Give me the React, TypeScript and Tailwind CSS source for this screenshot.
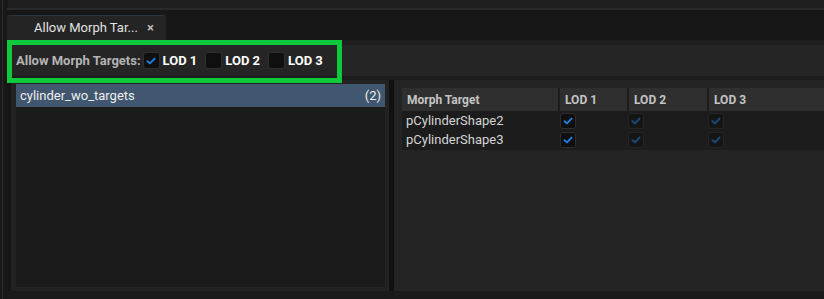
import React from 'react';

const font = { fontFamily: 'Roboto, "Noto Sans", sans-serif' };

const Check: React.FC<{ color: string }> = ({ color }) => (
  <svg width="10" height="10" viewBox="0 0 10 10" fill="none">
    <path d="M1.5 5.2 L4 7.4 L8.6 2.6" stroke={color} strokeWidth="1.9" strokeLinecap="round" strokeLinejoin="round" />
  </svg>
);

const Box: React.FC<{ checked?: boolean; disabled?: boolean; size?: string }> = ({ checked, disabled, size = 'w-[17px] h-[17px]' }) => (
  <div
    className={`${size} flex items-center justify-center rounded-[3px] border ${
      disabled ? 'bg-[#151515] border-[#242424]' : 'bg-[#0f0f0f] border-[#2e2e2e]'
    }`}
  >
    {checked && <Check color={disabled ? '#1c4d80' : '#1f80e6'} />}
  </div>
);

const rows = ['pCylinderShape2', 'pCylinderShape3'];

const App: React.FC = () => {
  return (
    <div className="w-[824px] h-[299px] flex bg-[#161616] overflow-hidden" style={font}>
      {/* left gutter */}
      <div className="w-[7px] flex bg-[#181818]">
        <div className="ml-[2px] w-[1px] bg-[#2c2c2c]" />
      </div>

      <div className="flex-1 flex flex-col relative">
        {/* top strip */}
        <div className="h-[8px] bg-[#1f1f1f] ml-[1px]" />
        <div className="h-[2px] bg-[#2a2a2a]" />

        {/* tab bar */}
        <div className="h-[30px] bg-[#171717] flex items-end">
          <div className="w-[159px] h-[25px] bg-[#242424] rounded-t-[3px] border-t border-[#2a3540] flex items-center pl-[27px] pr-[12px] text-[13px] text-[#e2e2e2]">
            <span className="flex-1">Allow Morph Tar...</span>
            <span className="text-[13px] text-[#bdbdbd] font-bold">×</span>
          </div>
        </div>

        {/* toolbar */}
        <div className="h-[5px] bg-[#1f1f1f]" />
        <div className="h-[31px] bg-[#252525] flex items-center pl-[9px] text-[13px] font-bold">
          <span className="text-[#b4b4b4] mr-[2px]">Allow Morph Targets:</span>
          <Box checked />
          <span className="text-white ml-[3px] mr-[8px]">LOD 1</span>
          <Box />
          <span className="text-white ml-[3px] mr-[8px]">LOD 2</span>
          <Box />
          <span className="text-white ml-[3px]">LOD 3</span>
        </div>
        <div className="h-[4px] bg-[#1c1c1c]" />

        {/* panels */}
        <div className="flex-1 flex">
          <div className="ml-[4px] w-[378px] bg-[#222222] pt-[4px] pl-[5px] pr-[4px] pb-[4px] flex">
            <div className="flex-1 bg-[#1b1b1b]">
              <div className="h-[23px] bg-[#41566f] flex items-center justify-between px-[4px] text-[13px] text-[#eeeeee]">
                <span>cylinder_wo_targets</span>
                <span>(2)</span>
              </div>
            </div>
          </div>
          <div className="w-[5px] bg-[#111111]" />
          <div className="flex-1 bg-[#242424] pt-[8px] pl-[8px]">
            <div className="h-[23px] bg-[#2f2f2f] flex text-[12px] font-bold text-[#c4c4c4]">
              <div className="w-[156px] flex items-center pl-[5px]">Morph Target</div>
              <div className="w-[69px] flex items-center pl-[5px] border-l-2 border-[#1d1d1d]">LOD 1</div>
              <div className="w-[80px] flex items-center pl-[5px] border-l-2 border-[#1d1d1d]">LOD 2</div>
              <div className="flex-1 flex items-center pl-[5px] border-l-2 border-[#1d1d1d]">LOD 3</div>
            </div>
            <div className="bg-[#1c1c1c] pb-[1px]">
              {rows.map((r) => (
                <div key={r} className="h-[19px] flex items-center text-[13px] text-[#d4d4d4]">
                  <div className="w-[156px] pl-[4px]">{r}</div>
                  <div className="w-[69px] pl-[2px]">
                    <Box checked size="w-[16px] h-[16px]" />
                  </div>
                  <div className="w-[80px] pl-[1px]">
                    <Box checked disabled size="w-[16px] h-[16px]" />
                  </div>
                  <div className="flex-1 pl-[1px]">
                    <Box checked disabled size="w-[16px] h-[16px]" />
                  </div>
                </div>
              ))}
            </div>
          </div>
        </div>
        <div className="h-[8px] bg-[#1a1a1a]" />

        {/* highlight annotation */}
        <div className="absolute left-0 top-[40px] w-[335px] h-[43px] border-[5px] border-[#10c83c] pointer-events-none" />
      </div>
    </div>
  );
};

export default App;
